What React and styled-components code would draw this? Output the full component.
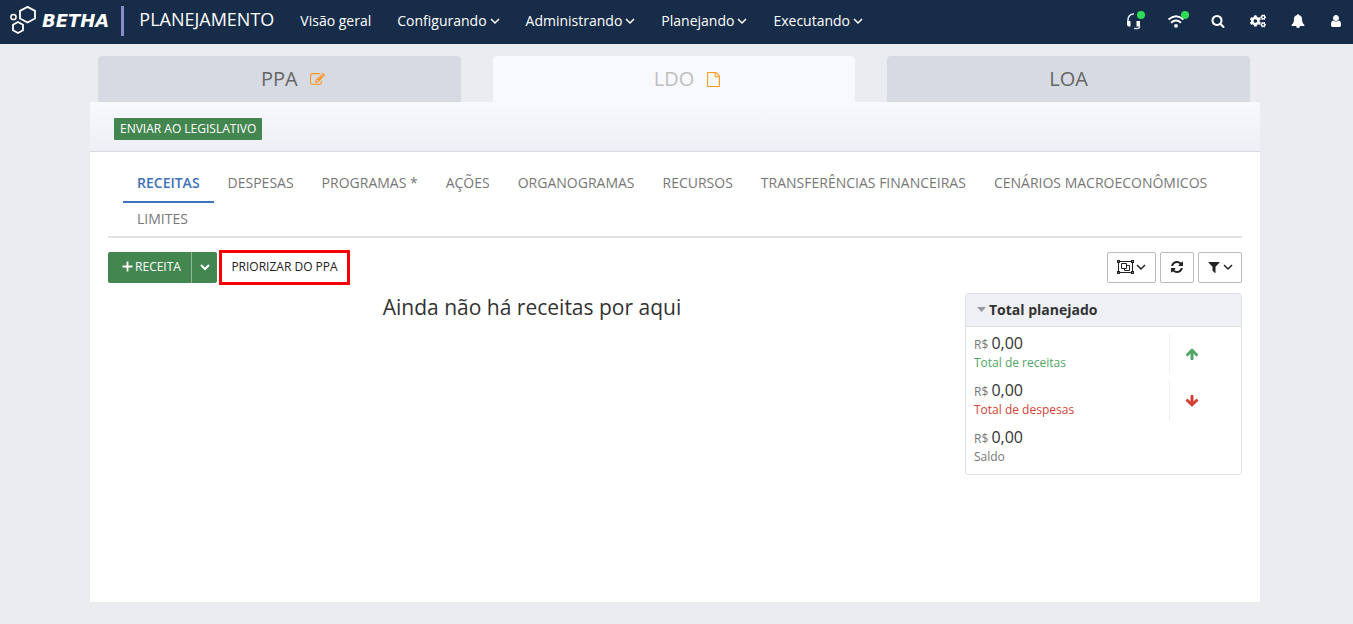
import { styled, createGlobalStyle } from 'styled-components';
import { FaCogs } from 'react-icons/fa';

const GlobalStyle = createGlobalStyle`
    * {
        box-sizing: border-box;
    }
    body {
        margin: 0;
        background: #ebecf0;
        color: #333;
        font: 14px/20px 'Open Sans', sans-serif;
    }
    button {
        font-family: inherit;
        cursor: pointer;
    }
`;

const TopBar = styled.header`
    display: flex;
    align-items: center;
    height: 44px;
    padding: 0 9px 2px;
    background: #162c48;
    color: #fff;
`;

const Brand = styled.a`
    display: flex;
    align-items: center;
    gap: 5px;
    height: 30px;
    padding-right: 12px;
    border-right: 3px solid #8a8bca;
    color: #fff;
    font: italic bold 18px/20px 'DejaVu Sans', sans-serif;
    text-decoration: none;
`;

const Product = styled.span`
    margin: 0 26px 0 15px;
    padding-bottom: 4px;
    font-size: 18px;
    line-height: 24px;
`;

const MainMenu = styled.nav`
    display: flex;
    flex: 1;
    gap: 26px;
    a {
        display: flex;
        align-items: center;
        gap: 3px;
        color: #fff;
        text-decoration: none;
    }
`;

const Tools = styled.div`
    display: flex;
    align-items: center;
    gap: 20px;
`;

const ToolButton = styled.button`
    position: relative;
    display: flex;
    align-items: center;
    justify-content: center;
    width: ${(props) => props.$width || '20px'};
    height: 24px;
    padding: 0;
    border: 0;
    background: none;
    color: #fff;
`;

const StatusDot = styled.i`
    position: absolute;
    top: 2px;
    right: -1px;
    width: 8px;
    height: 8px;
    border-radius: 50%;
    background: #2fdc57;
`;

const Page = styled.main`
    padding: 12px 93px 22px 90px;
`;

const Stages = styled.nav`
    display: grid;
    grid-template-columns: repeat(3, 1fr);
    gap: 32px;
    padding: 0 10px 0 8px;
`;

const Stage = styled.a`
    display: flex;
    align-items: center;
    justify-content: center;
    gap: 12px;
    height: 46px;
    padding-left: ${(props) => (props.$flagged ? '27px' : '0')};
    border-radius: 4px 4px 0 0;
    background: ${(props) => (props.$active ? '#f8f9fd' : '#d6dae2')};
    color: ${(props) => (props.$active ? '#bfbfbf' : '#666')};
    font-size: 20px;
    text-decoration: none;
    svg {
        color: #ff9619;
    }
`;

const ActionStrip = styled.div`
    display: flex;
    align-items: center;
    height: 50px;
    padding: 4px 24px 0;
    border-bottom: 1px solid #d8d9e4;
    background: linear-gradient(#f8f9fd, #eeeff5);
`;

const SendButton = styled.button`
    height: 22px;
    padding: 0 6px;
    border: 0;
    border-radius: 1px;
    background: #448650;
    color: #fff;
    font-size: 12px;
    line-height: 20px;
`;

const Card = styled.div`
    min-height: 450px;
    padding: 15px 18px;
    background: #fff;
`;

const Tabs = styled.nav`
    display: flex;
    flex-wrap: wrap;
    row-gap: 3px;
    padding-left: 15px;
    border-bottom: 2px solid #e1e2e7;
`;

const Tab = styled.a`
    height: 36px;
    margin-bottom: -3px;
    padding: 6px 14px;
    border-bottom: 2px solid ${(props) => (props.$active ? '#3d73b9' : 'transparent')};
    color: ${(props) => (props.$active ? '#3d73b9' : '#777')};
    font-weight: ${(props) => (props.$active ? 600 : 400)};
    text-decoration: none;
`;

const Toolbar = styled.div`
    display: flex;
    justify-content: space-between;
    padding: 14px 0 10px;
`;

const ButtonSet = styled.div`
    display: flex;
    gap: 4px;
`;

const Split = styled.div`
    display: flex;
`;

const Button = styled.button`
    display: flex;
    align-items: center;
    justify-content: center;
    gap: 2px;
    width: ${(props) => props.$width};
    height: 31px;
    padding: 0 0 2px;
    border: 0;
    background: #fff;
    color: #222;
    font-size: 12px;
    line-height: 20px;
    white-space: nowrap;
`;

const GreenButton = styled(Button)`
    padding-left: 4px;
    border-radius: 2px 0 0 2px;
    background: #448650;
    color: #fff;
    & + & {
        padding-left: 0;
        border-left: 1px solid #8fb796;
        border-radius: 0 2px 2px 0;
    }
`;

const MarkedButton = styled(Button)`
    outline: 3px solid #f90006;
    outline-offset: -1px;
`;

const OutlineButton = styled(Button)`
    border: 1px solid #bbb;
    border-radius: 2px;
`;

const Content = styled.div`
    display: grid;
    grid-template-columns: 1fr 277px;
    align-items: start;
    gap: 9px;
`;

const EmptyMessage = styled.h2`
    margin: 0;
    font-size: 21px;
    font-weight: 400;
    line-height: 28px;
    text-align: center;
`;

const Panel = styled.section`
    border: 1px solid #e0e1e5;
    border-radius: 3px;
`;

const PanelHeader = styled.button`
    display: flex;
    align-items: center;
    gap: 3px;
    width: 100%;
    height: 33px;
    padding: 0 11px 1px;
    border: 0;
    border-bottom: 1px solid #e0e1e5;
    background: #eff0f6;
    color: #333;
    font-size: 14px;
    font-weight: 700;
`;

const Totals = styled.div`
    display: grid;
    gap: 8px;
    padding: 7px 8px;
`;

const TotalRow = styled.div`
    display: grid;
    grid-template-columns: 1fr 64px;
    height: 39px;
    color: ${(props) => props.$color};
    .value {
        color: #777;
        font-size: 12px;
        line-height: 18px;
        b {
            color: #333;
            font-size: 16px;
            font-weight: 400;
        }
    }
    .label {
        font-size: 12px;
        line-height: 18px;
    }
    .trend {
        display: flex;
        align-items: center;
        padding-left: 15px;
        border-left: 1px solid #eee;
    }
`;

const paths = {
    search: 'M1216 832q0-185-131.5-316.5t-316.5-131.5-316.5 131.5-131.5 316.5 131.5 316.5 316.5 131.5 316.5-131.5 131.5-316.5zm512 832q0 52-38 90t-90 38q-54 0-90-38l-343-342q-179 124-399 124-143 0-273.5-55.5t-225-150-150-225-55.5-273.5 55.5-273.5 150-225 225-150 273.5-55.5 273.5 55.5 225 150 150 225 55.5 273.5q0 220-124 399l343 343q37 37 37 90z',
    refresh: 'M1639 1056q0 5-1 7-64 268-268 434.5t-478 166.5q-146 0-282.5-55t-243.5-157l-129 129q-19 19-45 19t-45-19-19-45v-448q0-26 19-45t45-19h448q26 0 45 19t19 45-19 45l-137 137q71 66 161 102t187 36q134 0 250-65t186-179q11-17 53-117 8-23 30-23h192q13 0 22.5 9.5t9.5 22.5zm25-800v448q0 26-19 45t-45 19h-448q-26 0-45-19t-19-45 19-45l138-138q-148-137-349-137-134 0-250 65t-186 179q-11 17-53 117-8 23-30 23h-199q-13 0-22.5-9.5t-9.5-22.5v-7q65-268 270-434.5t480-166.5q146 0 284 55.5t245 156.5l130-129q19-19 45-19t45 19 19 45z',
    filter: 'M1595 295q17 41-14 70l-493 493v742q0 42-39 59-13 5-25 5-27 0-45-19l-256-256q-19-19-19-45v-486l-493-493q-31-29-14-70 17-39 59-39h1280q42 0 59 39z',
    arrowUp: 'M1675 971q0 51-37 90l-75 75q-38 38-91 38-54 0-90-38l-294-293v704q0 52-37.5 84.5t-90.5 32.5h-128q-53 0-90.5-32.5t-37.5-84.5v-704l-294 293q-36 38-90 38t-90-38l-75-75q-38-38-38-90 0-53 38-91l651-651q35-37 90-37 54 0 91 37l651 651q37 39 37 91z',
    edit: 'M888 1184l116-116-152-152-116 116v56h96v96h56zm440-720q-16-16-33 1l-350 350q-17 17-1 33t33-1l350-350q17-17 1-33zm80 594v190q0 119-84.5 203.5t-203.5 84.5h-832q-119 0-203.5-84.5t-84.5-203.5v-832q0-119 84.5-203.5t203.5-84.5h832q63 0 117 25 15 7 18 23 3 17-9 29l-49 49q-14 14-32 8-23-6-45-6h-832q-66 0-113 47t-47 113v832q0 66 47 113t113 47h832q66 0 113-47t47-113v-126q0-13 9-22l64-64q15-15 35-7t20 29zm-96-738l288 288-672 672h-288v-288zm444 132l-92 92-288-288 92-92q28-28 68-28t68 28l152 152q28 28 28 68t-28 68z',
    file: 'M1596 380q28 28 48 76t20 88v1152q0 40-28 68t-68 28h-1344q-40 0-68-28t-28-68v-1600q0-40 28-68t68-28h896q40 0 88 20t76 48zm-444-244v376h376q-10-29-22-41l-313-313q-12-12-41-22zm384 1528v-1024h-416q-40 0-68-28t-28-68v-416h-768v1536h1280z',
    bell: 'M912 1696q0-16-16-16-59 0-101.5-42.5t-42.5-101.5q0-16-16-16t-16 16q0 73 51.5 124.5t124.5 51.5q16 0 16-16zm816-288q0 52-38 90t-90 38h-448q0 106-75 181t-181 75-181-75-75-181h-448q-52 0-90-38t-38-90q50-42 91-88t85-119.5 74.5-158.5 50-206 19.5-260q0-152 117-282.5t307-158.5q-8-19-8-39 0-40 28-68t68-28 68 28 28 68q0 20-8 39 190 28 307 158.5t117 282.5q0 139 19.5 260t50 206 74.5 158.5 85 119.5 91 88z',
    user: 'M1536 1399q0 109-62.5 187t-150.5 78h-854q-88 0-150.5-78t-62.5-187q0-85 8.5-160.5t31.5-152 58.5-131 94-89 134.5-34.5q131 128 313 128t313-128q76 0 134.5 34.5t94 89 58.5 131 31.5 152 8.5 160.5zm-256-887q0 159-112.5 271.5t-271.5 112.5-271.5-112.5-112.5-271.5 112.5-271.5 271.5-112.5 271.5 112.5 112.5 271.5z',
};

const Icon = ({ name, size = 14, flip }) => (
    <svg width={size} height={size} viewBox="0 0 1792 1792" fill="currentColor" aria-hidden="true">
        <path d={paths[name]} transform={flip ? 'rotate(180 896 896)' : undefined} />
    </svg>
);

const Chevron = ({ bold }) => (
    <svg width="10" height="8" viewBox="0 0 10 8" fill="none" stroke="currentColor" strokeWidth={bold ? 2 : 1.5} aria-hidden="true">
        <path d="M1 2l4 4 4-4" />
    </svg>
);

const BethaLogo = () => (
    <svg width="28" height="30" viewBox="0 0 28 30" fill="none" stroke="currentColor" strokeWidth="1.8" aria-hidden="true">
        <path d="M18.5 0.9l7.5 4v7.6l-7.5 4-7.5-4V4.9z" />
        <path d="M9 16l5 2.7v5.6l-5 2.7-5-2.7v-5.6z" />
        <circle cx="4.5" cy="11" r="2.6" strokeWidth="1.5" />
    </svg>
);

const Headset = () => (
    <svg width="16" height="18" viewBox="0 0 16 18" aria-hidden="true">
        <path d="M2 11V8a5.500 5.500 0 0 1 6-6" fill="none" stroke="#e6e9ed" strokeWidth="1.6" />
        <path d="M1 9H4.5v5.5H3a2 2 0 0 1-2-2zM10.500 9H14v5.500h-3.500z" fill="#fff" />
        <path d="M13.500 14v0.500q0 2-2 2H8" fill="none" stroke="#cfd5dc" strokeWidth="1.6" />
    </svg>
);

const Wifi = () => (
    <svg width="18" height="16" viewBox="0 0 18 16" fill="none" stroke="currentColor" strokeWidth="1.9" aria-hidden="true">
        <path d="M1.5 6.5Q9 0 16.5 6.5" />
        <path d="M4 9.8Q9 5.400 14 9.800" />
        <circle cx="9" cy="12.8" r="1.9" fill="currentColor" stroke="none" />
    </svg>
);

const ObjectGroup = () => (
    <svg width="17" height="14" viewBox="0 0 17 14" fill="none" stroke="currentColor" aria-hidden="true">
        <path d="M1.5 1.5h14v11h-14z" />
        <path d="M4.5 3.5h5v5h-5zM9.5 5.5h3v5h-5v-2" />
        <path d="M0 0h3v3H0zM14 0h3v3h-3zM0 11h3v3H0zM14 11h3v3h-3z" fill="currentColor" stroke="none" />
        <path d="M1 1h1v1H1zM15 1h1v1h-1zM1 12h1v1H1zM15 12h1v1h-1z" fill="#888" stroke="none" />
    </svg>
);

const Plus = () => (
    <svg width="11" height="11" viewBox="0 0 11 11" stroke="currentColor" strokeWidth="1.8" aria-hidden="true">
        <path d="M5.5 0.5v10M0.5 5.5h10" />
    </svg>
);

const Caret = () => (
    <svg width="9" height="5" viewBox="0 0 9 5" fill="#999" aria-hidden="true">
        <path d="M0 0h9L4.5 5z" />
    </svg>
);

const menu = ['Configurando', 'Administrando', 'Planejando', 'Executando'];

const tabs = [
    'RECEITAS',
    'DESPESAS',
    'PROGRAMAS *',
    'AÇÕES',
    'ORGANOGRAMAS',
    'RECURSOS',
    'TRANSFERÊNCIAS FINANCEIRAS',
    'CENÁRIOS MACROECONÔMICOS',
    'LIMITES',
];

const totals = [
    { label: 'Total de receitas', color: '#50a565', trend: 'up' },
    { label: 'Total de despesas', color: '#d43f35', trend: 'down' },
    { label: 'Saldo', color: '#777' },
];

const Header = () => (
    <TopBar>
        <Brand href="#">
            <BethaLogo />
            BETHA
        </Brand>
        <Product>PLANEJAMENTO</Product>
        <MainMenu>
            <a href="#">Visão geral</a>
            {menu.map((item) => (
                <a href="#" key={item}>
                    {item}
                    <Chevron />
                </a>
            ))}
        </MainMenu>
        <Tools>
            <ToolButton aria-label="Suporte">
                <Headset />
                <StatusDot />
            </ToolButton>
            <ToolButton $width="24px" aria-label="Conexão">
                <Wifi />
                <StatusDot />
            </ToolButton>
            <ToolButton aria-label="Pesquisar">
                <Icon name="search" />
            </ToolButton>
            <ToolButton aria-label="Configurações">
                <FaCogs size={16} />
            </ToolButton>
            <ToolButton aria-label="Notificações">
                <Icon name="bell" />
            </ToolButton>
            <ToolButton $width="16px" aria-label="Usuário">
                <Icon name="user" />
            </ToolButton>
        </Tools>
    </TopBar>
);

const TotalsPanel = () => (
    <Panel>
        <PanelHeader>
            <Caret />
            Total planejado
        </PanelHeader>
        <Totals>
            {totals.map(({ label, color, trend }) => (
                <TotalRow key={label} $color={color}>
                    <div>
                        <div className="value">
                            R$ <b>0,00</b>
                        </div>
                        <div className="label">{label}</div>
                    </div>
                    {trend && (
                        <div className="trend">
                            <Icon name="arrowUp" flip={trend === 'down'} />
                        </div>
                    )}
                </TotalRow>
            ))}
        </Totals>
    </Panel>
);

export default function App() {
    return (
        <>
            <GlobalStyle />
            <Header />
            <Page>
                <Stages>
                    <Stage href="#" $flagged>
                        PPA <Icon name="edit" size={15} />
                    </Stage>
                    <Stage href="#" $active $flagged>
                        LDO <Icon name="file" size={15} />
                    </Stage>
                    <Stage href="#">LOA</Stage>
                </Stages>
                <ActionStrip>
                    <SendButton>ENVIAR AO LEGISLATIVO</SendButton>
                </ActionStrip>
                <Card>
                    <Tabs>
                        {tabs.map((tab, index) => (
                            <Tab href="#" key={tab} $active={index === 0}>
                                {tab}
                            </Tab>
                        ))}
                    </Tabs>
                    <Toolbar>
                        <ButtonSet>
                            <Split>
                                <GreenButton $width="83px">
                                    <Plus />
                                    RECEITA
                                </GreenButton>
                                <GreenButton $width="26px" aria-label="Mais opções">
                                    <Chevron bold />
                                </GreenButton>
                            </Split>
                            <MarkedButton $width="127px">PRIORIZAR DO PPA</MarkedButton>
                        </ButtonSet>
                        <ButtonSet>
                            <OutlineButton $width="49px" aria-label="Agrupar">
                                <ObjectGroup />
                                <Chevron />
                            </OutlineButton>
                            <OutlineButton $width="34px" aria-label="Atualizar">
                                <Icon name="refresh" />
                            </OutlineButton>
                            <OutlineButton $width="44px" aria-label="Filtrar">
                                <Icon name="filter" />
                                <Chevron />
                            </OutlineButton>
                        </ButtonSet>
                    </Toolbar>
                    <Content>
                        <EmptyMessage>Ainda não há receitas por aqui</EmptyMessage>
                        <TotalsPanel />
                    </Content>
                </Card>
            </Page>
        </>
    );
}
